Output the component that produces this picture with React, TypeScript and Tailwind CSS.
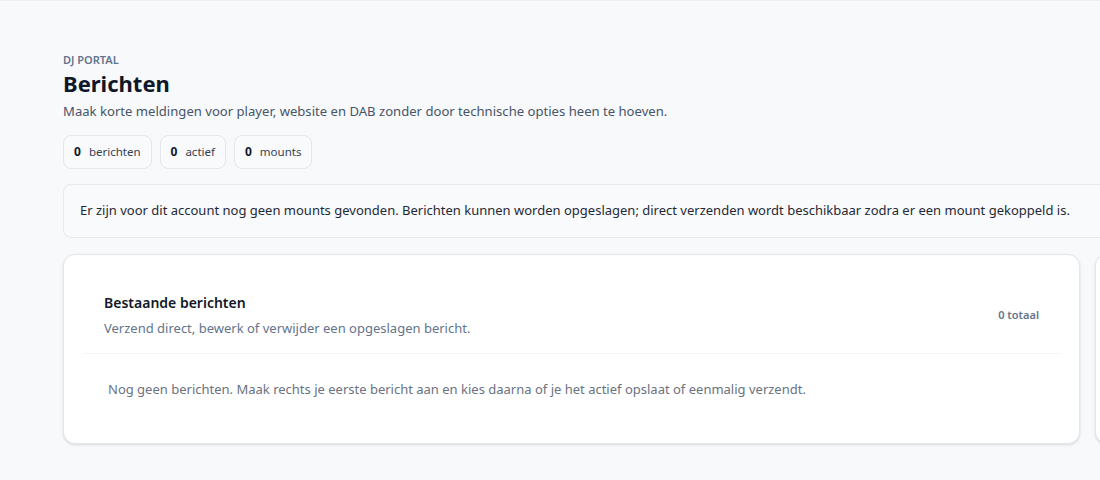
import React from "react";

const stats = [
  { value: 0, label: "berichten" },
  { value: 0, label: "actief" },
  { value: 0, label: "mounts" },
];

export default function App() {
  return (
    <div
      className="min-h-[480px] w-[1100px] overflow-hidden border-t border-[#eef0f3] bg-[#f8f9fb] text-[#111827]"
      style={{ fontFamily: '"Segoe UI", "Noto Sans", sans-serif' }}
    >
      <div className="w-[1080px] pl-[63px] pt-[52px]">
        <div className="text-[11px] font-semibold uppercase leading-[14px] text-[#64748b]">
          DJ Portal
        </div>
        <h1 className="mt-[2px] text-[22px] font-bold leading-[28px] text-[#0f172a]">Berichten</h1>
        <p className="mt-[5px] text-[13.1px] leading-[18px] text-[#475569]">
          Maak korte meldingen voor player, website en DAB zonder door technische opties heen te hoeven.
        </p>

        <div className="mt-[15px] flex gap-2">
          {stats.map((s) => (
            <div
              key={s.label}
              className="flex h-[34px] items-center gap-[8px] rounded-lg border border-[#e5e7eb] bg-[#f9fafb] px-[10px]"
            >
              <span className="text-[12px] font-bold text-[#0f172a]">{s.value}</span>
              <span className="text-[11.5px] text-[#334155]">{s.label}</span>
            </div>
          ))}
        </div>

        <div className="mt-[15px] flex h-[54px] w-[1060px] items-center rounded-lg border border-[#e8eaee] bg-[#f9fafb] px-[16px]">
          <p className="text-[13px] text-[#1f2937]">
            Er zijn voor dit account nog geen mounts gevonden. Berichten kunnen worden opgeslagen; direct verzenden wordt beschikbaar zodra er een mount gekoppeld is.
          </p>
        </div>

        <div className="mt-[16px] grid grid-cols-[1017px_300px] gap-[15px]">
          <section className="h-[190px] rounded-xl border border-[#e5e7eb] bg-white px-[20px] pb-[20px] pt-[19px] shadow-sm">
            <div className="flex items-center justify-between border-b border-[#f1f3f5] px-[20px] pb-[16px] pt-[19px]">
              <div>
                <h2 className="text-[14px] font-semibold leading-[20px] text-[#111827]">Bestaande berichten</h2>
                <p className="mt-[6px] text-[13px] leading-[18px] text-[#64748b]">
                  Verzend direct, bewerk of verwijder een opgeslagen bericht.
                </p>
              </div>
              <span className="text-[11px] font-semibold text-[#64748b]">0 totaal</span>
            </div>
            <p className="px-[24px] pt-[26px] text-[13px] text-[#6b7280]">
              Nog geen berichten. Maak rechts je eerste bericht aan en kies daarna of je het actief opslaat of eenmalig verzendt.
            </p>
          </section>
          <section className="h-[190px] rounded-xl border border-[#e5e7eb] bg-white shadow-sm" />
        </div>
      </div>
    </div>
  );
}
